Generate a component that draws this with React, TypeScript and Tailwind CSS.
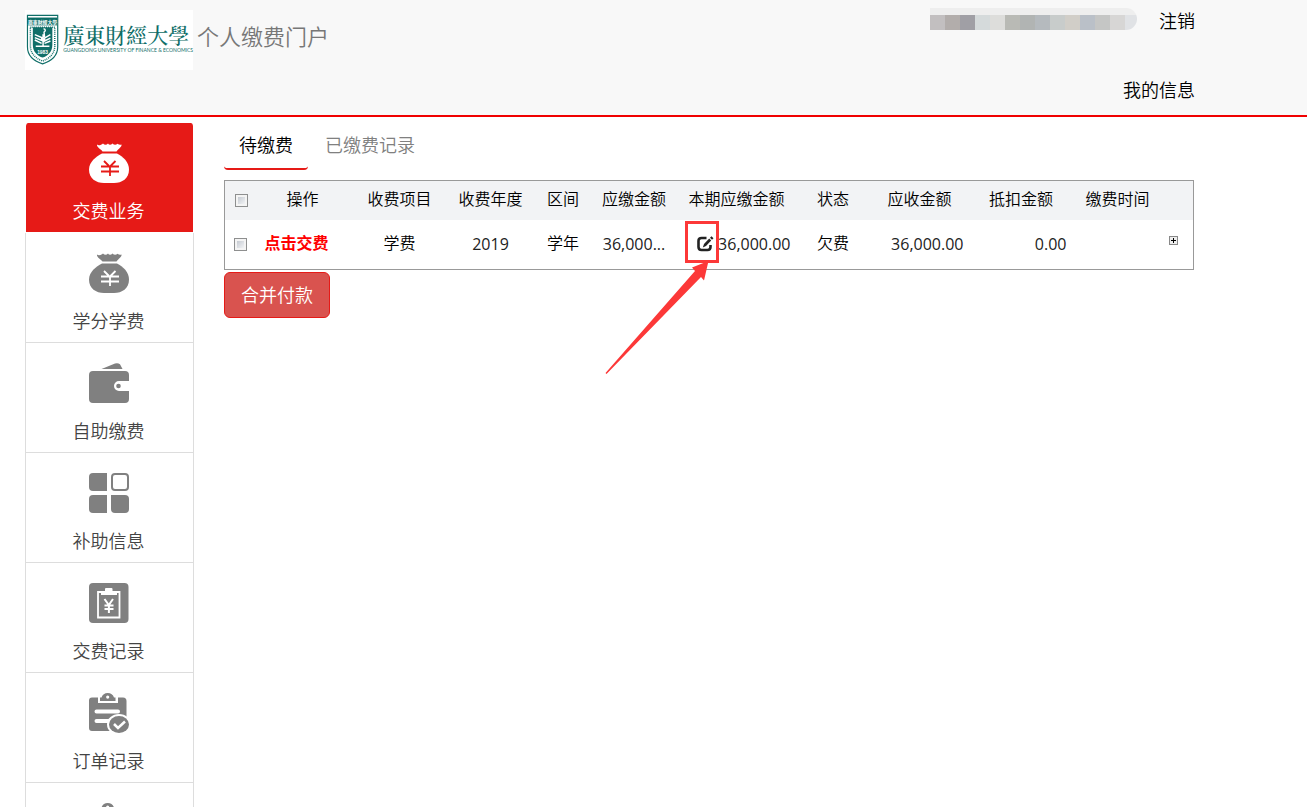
import type { ReactNode } from "react";

const MONEY_BAG = (
  <>
    <path
      fill="currentColor"
      d="M8 1.500C9.500 3 12 2.200 14 .5C15.500 2.200 17.500 2.200 19 .5C20 2.200 22 2.200 23.500 .5C25 2.200 27 2.200 28.500 .8C30 2 31.500 1.800 32.500 1.500C33 4 29.500 5.500 27.500 8.500H13.500C12 6 7.500 4.500 8 1.500Z"
    />
    <path
      fill="currentColor"
      d="M13 10.500H28C34 13.500 40 19 40 26.500C40 35.500 33 40 25 40H15C7 40 0 35.500 0 26.500C0 19 7 13.500 13 10.500Z"
    />
  </>
);

function MoneyBagIcon({ mark }: { mark: string }) {
  return (
    <svg width="40" height="40" viewBox="0 0 40 40" aria-hidden="true">
      {MONEY_BAG}
      <path
        d="M15 18L20 23M26.500 18L21.500 23M12 23.500H30M12 28.500H30M21 23.500V33"
        fill="none"
        stroke={mark}
        strokeWidth="1.800"
      />
    </svg>
  );
}

function WalletIcon() {
  return (
    <svg width="40" height="40" viewBox="0 0 40 40" aria-hidden="true" fill="currentColor">
      <path d="M12.500 6L26 .5Q29 -.3 31 1.200L33.500 6Z" />
      <path d="M4 8H36Q40 8 40 12V18H30A5 5 0 0 0 30 28H40V36Q40 40 36 40H4Q0 40 0 36V12Q0 8 4 8Z" />
      <circle cx="29.500" cy="23" r="2.300" />
    </svg>
  );
}

function TilesIcon() {
  return (
    <svg width="40" height="40" viewBox="0 0 40 40" aria-hidden="true" fill="currentColor">
      <path d="M4 0H18V18H4Q0 18 0 14V4Q0 0 4 0Z" />
      <path d="M4 22H18V40H4Q0 40 0 36V26Q0 22 4 22Z" />
      <path d="M22 22H36Q40 22 40 26V36Q40 40 36 40H26Q22 40 22 36Z" />
      <path
        d="M26 1H36Q39 1 39 4V14Q39 17 36 17H26Q23 17 23 14V4Q23 1 26 1Z"
        fill="none"
        stroke="currentColor"
        strokeWidth="2"
      />
    </svg>
  );
}

function BillIcon() {
  return (
    <svg width="40" height="40" viewBox="0 0 40 40" aria-hidden="true">
      <rect width="39.500" height="40" rx="4" fill="currentColor" />
      <path d="M9 9V34.500H30.500V9Z" fill="none" stroke="#fff" strokeWidth="1.800" />
      <path d="M12 8H16V6Q16 5 17 5H22.500Q23.500 5 23.500 6V8H28V12H12Z" fill="#fff" />
      <path
        d="M15.500 16L19.800 22L24 16M15.500 22.500H24.500M15.500 26H24.500M19.900 22V30"
        fill="none"
        stroke="#fff"
        strokeWidth="2"
      />
    </svg>
  );
}

function OrderIcon() {
  return (
    <svg width="40" height="40" viewBox="0 0 40 40" aria-hidden="true">
      <path
        fill="currentColor"
        fillRule="evenodd"
        d="M11 8V4.500H12.500Q14 0 18.700 0Q23.500 0 25 4.500H26.500V8ZM18.700 2.500A1.600 1.600 0 1 0 18.700 5.700A1.600 1.600 0 1 0 18.700 2.500Z"
      />
      <path
        fill="currentColor"
        d="M3 4.500H9V10H29V4.500H34Q37.500 4.500 37.500 8V36H24V38H3Q0 38 0 35V7.500Q0 4.500 3 4.500Z"
      />
      <path d="M7.500 18.500H29M7.500 28H22" stroke="#fff" strokeWidth="4" strokeLinecap="round" />
      <ellipse cx="30" cy="31.500" rx="12" ry="10.500" fill="#fff" />
      <ellipse cx="30" cy="31.500" rx="10" ry="8.500" fill="currentColor" />
      <path d="M25 31L29 35L36 28.500" fill="none" stroke="#fff" strokeWidth="2.500" />
    </svg>
  );
}

function Crest() {
  return (
    <svg width="34" height="52" viewBox="0 0 34 52" aria-hidden="true">
      <path d="M1.500 .8H32.500V33C32.500 43 25 48 17 50.500C9 48 1.500 43 1.500 33Z" fill="#fff" stroke="#0f6e68" strokeWidth="1.200" />
      <path d="M2 3H32V11H2Z" fill="#0f6e68" />
      <text x="17" y="9.200" textAnchor="middle" fontSize="5" fontWeight="700" fill="#fff" fontFamily="Noto Sans CJK TC, sans-serif">
        廣東財經大學
      </text>
      <path d="M4.500 13H29.500V32C29.500 40 24 45 17 47.500C10 45 4.500 40 4.500 32Z" fill="none" stroke="#0f6e68" strokeWidth="1.500" strokeDasharray="1 1" />
      <path d="M7 13H27V31C27 38 22 42.500 17 44C12 42.500 7 38 7 31Z" fill="#0f6e68" />
      <path
        d="M18 14.500C20.500 15 20 17 18.500 18L19 23M9 20.500L16 23.500V26.500L9 23.500M9 26L16 29.500M25 20.500L19 24V27L25 24M25 27L19 29.500M17.500 20V32M10 32.500H24"
        fill="none"
        stroke="#fff"
        strokeWidth="1.500"
      />
      <text x="17" y="40.500" textAnchor="middle" fontSize="5" fontWeight="700" fill="#fff" fontFamily="Liberation Sans, sans-serif">
        1983
      </text>
    </svg>
  );
}

function EditIcon() {
  return (
    <svg width="17" height="16" viewBox="0 0 17 16" aria-hidden="true">
      <path
        d="M9.500 2H4.500Q1.500 2 1.500 5V11Q1.500 14 4.500 14H10.500Q13.500 14 13.500 11V9"
        fill="none"
        stroke="#222"
        strokeWidth="2.600"
      />
      <path d="M5.800 11.500L7 8L12.200 2.600L14.200 4.600L9 10Z" fill="#222" />
      <path d="M13 1.800L14.500 .3L16.500 2.200L15 3.700Z" fill="#222" />
    </svg>
  );
}

type MenuItem = { label: string; icon: ReactNode };

const MENU: MenuItem[] = [
  { label: "学分学费", icon: <MoneyBagIcon mark="#fff" /> },
  { label: "自助缴费", icon: <WalletIcon /> },
  { label: "补助信息", icon: <TilesIcon /> },
  { label: "交费记录", icon: <BillIcon /> },
  { label: "订单记录", icon: <OrderIcon /> },
];

const MOSAIC = [
  "bg-[#c2bfc0]",
  "bg-[#b2adab]",
  "bg-[#a09fa5]",
  "bg-[#d5dadb]",
  "bg-[#dddddb]",
  "bg-[#b9bab5]",
  "bg-[#b1b4b3]",
  "bg-[#b5babe]",
  "bg-[#c8cccb]",
  "bg-[#d1cec8]",
  "bg-[#bac0c8]",
  "bg-[#c5c6c5]",
  "bg-[#d7d6d5]",
];

const CHECKBOX =
  "block size-[13px] appearance-none border border-[#8e8f8f] bg-linear-to-br from-[#b9bfc8] to-white outline-2 -outline-offset-3 outline-[#f4f4f4] checked:bg-[#4d7ab5]";

function Header() {
  return (
    <header className="shrink-0 border-b-2 border-[#f00000] bg-[#f8f8f8]">
      <div className="ml-[25px] flex h-[115px] max-w-[1170px] justify-between">
        <div className="flex items-start pt-[10px]">
          <a href="#home" className="flex h-[60px] w-[168px] bg-white pt-1 pl-[1px] text-[#0f6e68]">
            <Crest />
            <span className="ml-1 pt-2">
              <span className="block font-['Noto_Serif_CJK_TC','Noto_Sans_CJK_TC',sans-serif] text-[21px] leading-6 font-medium whitespace-nowrap">
                廣東財經大學
              </span>
              <span className="block font-['Lato',sans-serif] text-[5px] leading-[8px] whitespace-nowrap">
                GUANGDONG UNIVERSITY OF FINANCE &amp; ECONOMICS
              </span>
            </span>
          </a>
          <h1 className="ml-1 pt-[10px] text-[22px] leading-8 font-[350] text-[#777]">个人缴费门户</h1>
        </div>
        <div className="flex flex-col items-end justify-between pt-2 pb-[13px]">
          <div className="flex items-start">
            <div className="mr-[22px] overflow-hidden rounded-r-full" aria-hidden="true">
              <div className="h-[7px] bg-[#eeeeee]" />
              <div className="flex">
                {MOSAIC.map((tone) => (
                  <span key={tone} className={`h-[15px] w-[15px] ${tone}`} />
                ))}
                <span className="h-[15px] w-3 bg-[#e0e2e5]" />
              </div>
            </div>
            <a href="#logout" className="text-[18px] leading-[26px] font-[350]">注销</a>
          </div>
          <a href="#profile" className="text-[18px] leading-6 font-[350]">我的信息</a>
        </div>
      </div>
    </header>
  );
}

function Sidebar() {
  return (
    <nav className="w-[169px] shrink-0 text-[18px] leading-6 font-[350]">
      <a
        href="#pay"
        className="flex h-[110px] flex-col items-center gap-4 rounded-t-[3px] border-x border-b border-white bg-[#e61a17] bg-clip-padding pt-5 pr-[2px] text-white"
      >
        <MoneyBagIcon mark="#e61a17" />
        交费业务
      </a>
      {MENU.map((item) => (
        <a
          key={item.label}
          href={`#${item.label}`}
          className="flex h-[110px] flex-col items-center gap-4 border-x border-b border-[#ddd] pt-5 pr-[2px] text-[#808080]"
        >
          {item.icon}
          <span className="text-[#444]">{item.label}</span>
        </a>
      ))}
      <a
        href="#orders"
        aria-label="订单"
        className="flex h-[110px] flex-col items-center border-x border-b border-[#ddd] pt-5 pr-[2px] text-[#808080]"
      >
        <OrderIcon />
      </a>
    </nav>
  );
}

const HEADINGS = [
  "操作",
  "收费项目",
  "收费年度",
  "区间",
  "应缴金额",
  "本期应缴金额",
  "状态",
  "应收金额",
  "抵扣金额",
  "缴费时间",
];

function FeeTable() {
  return (
    <table className="w-full table-fixed border-collapse border border-[#999] text-[16px] leading-6 text-[#222]">
      <colgroup>
        <col className="w-[34px]" />
        <col className="w-[88px]" />
        <col className="w-[106px]" />
        <col className="w-[76px]" />
        <col className="w-[69px]" />
        <col className="w-[73px]" />
        <col className="w-[132px]" />
        <col className="w-[61px]" />
        <col className="w-[112px]" />
        <col className="w-[91px]" />
        <col className="w-[102px]" />
        <col />
      </colgroup>
      <thead>
        <tr className="h-[39px] bg-[#f2f3f5]">
          <th className="pl-[10px]">
            <input type="checkbox" aria-label="全选" className={CHECKBOX} />
          </th>
          {HEADINGS.map((heading) => (
            <th key={heading} className="pb-[3px] font-[350] whitespace-nowrap text-black">
              {heading}
            </th>
          ))}
          <th />
        </tr>
      </thead>
      <tbody>
        <tr className="h-[50px] text-center">
          <td className="pl-[9px]">
            <input type="checkbox" aria-label="选择学费" className={CHECKBOX} />
          </td>
          <td className="pr-3 pb-[3px] whitespace-nowrap">
            <a href="#pay-now" className="font-bold text-[#ff0000]">点击交费</a>
          </td>
          <td className="pb-[3px] font-[350] text-black">学费</td>
          <td>2019</td>
          <td className="pb-[3px] font-[350] text-black">学年</td>
          <td className="truncate">36,000...</td>
          <td className="relative pr-3">
            <div className="flex items-center justify-end gap-1">
              <button type="button" aria-label="修改金额">
                <EditIcon />
              </button>
              36,000.00
            </div>
            <div className="pointer-events-none absolute top-[1px] left-[14px] h-[42px] w-[34px] border-3 border-[#fc3838]" />
            <svg
              className="pointer-events-none absolute top-[41px] left-[-66px]"
              width="106"
              height="114"
              viewBox="0 0 106 114"
              aria-hidden="true"
            >
              <path d="M0.500 112L90 10L87 6.500L103.500 0L99 19.500L96 16L1.500 113Z" fill="#fc3838" />
            </svg>
          </td>
          <td className="pb-[3px] font-[350] text-black">欠费</td>
          <td className="pr-3 text-right">36,000.00</td>
          <td className="text-right">0.00</td>
          <td />
          <td>
            <button
              type="button"
              aria-label="展开"
              className="mb-2 flex size-[9px] items-center justify-center border border-[#888] bg-[#eee]"
            >
              <svg width="5" height="5" viewBox="0 0 5 5" aria-hidden="true">
                <path d="M2 0H3V2H5V3H3V5H2V3H0V2H2Z" fill="#000" />
              </svg>
            </button>
          </td>
        </tr>
      </tbody>
    </table>
  );
}

export default function App() {
  return (
    <div className="flex h-screen flex-col overflow-hidden bg-white font-['Open_Sans','Noto_Sans_CJK_SC',sans-serif] text-black">
      <Header />
      <div className="ml-[25px] flex max-w-[1169px] gap-[30px] pt-[6px]">
        <Sidebar />
        <main className="min-w-0 flex-1">
          <div role="tablist" className="flex h-[47px] text-[18px] font-[350]">
            <button
              type="button"
              role="tab"
              aria-selected="true"
              className="rounded-sm border-b-2 border-[#e61a17] px-[15px]"
            >
              待缴费
            </button>
            <button
              type="button"
              role="tab"
              aria-selected="false"
              className="ml-[2px] border-b-2 border-transparent px-[15px] text-[#808080]"
            >
              已缴费记录
            </button>
          </div>
          <div className="pt-[10px]">
            <FeeTable />
          </div>
          <button
            type="button"
            className="mt-[2px] h-[46px] rounded-md border border-[#e61a17] bg-[#d9534f] px-4 text-[18px] font-[350] text-white"
          >
            合并付款
          </button>
        </main>
      </div>
    </div>
  );
}
